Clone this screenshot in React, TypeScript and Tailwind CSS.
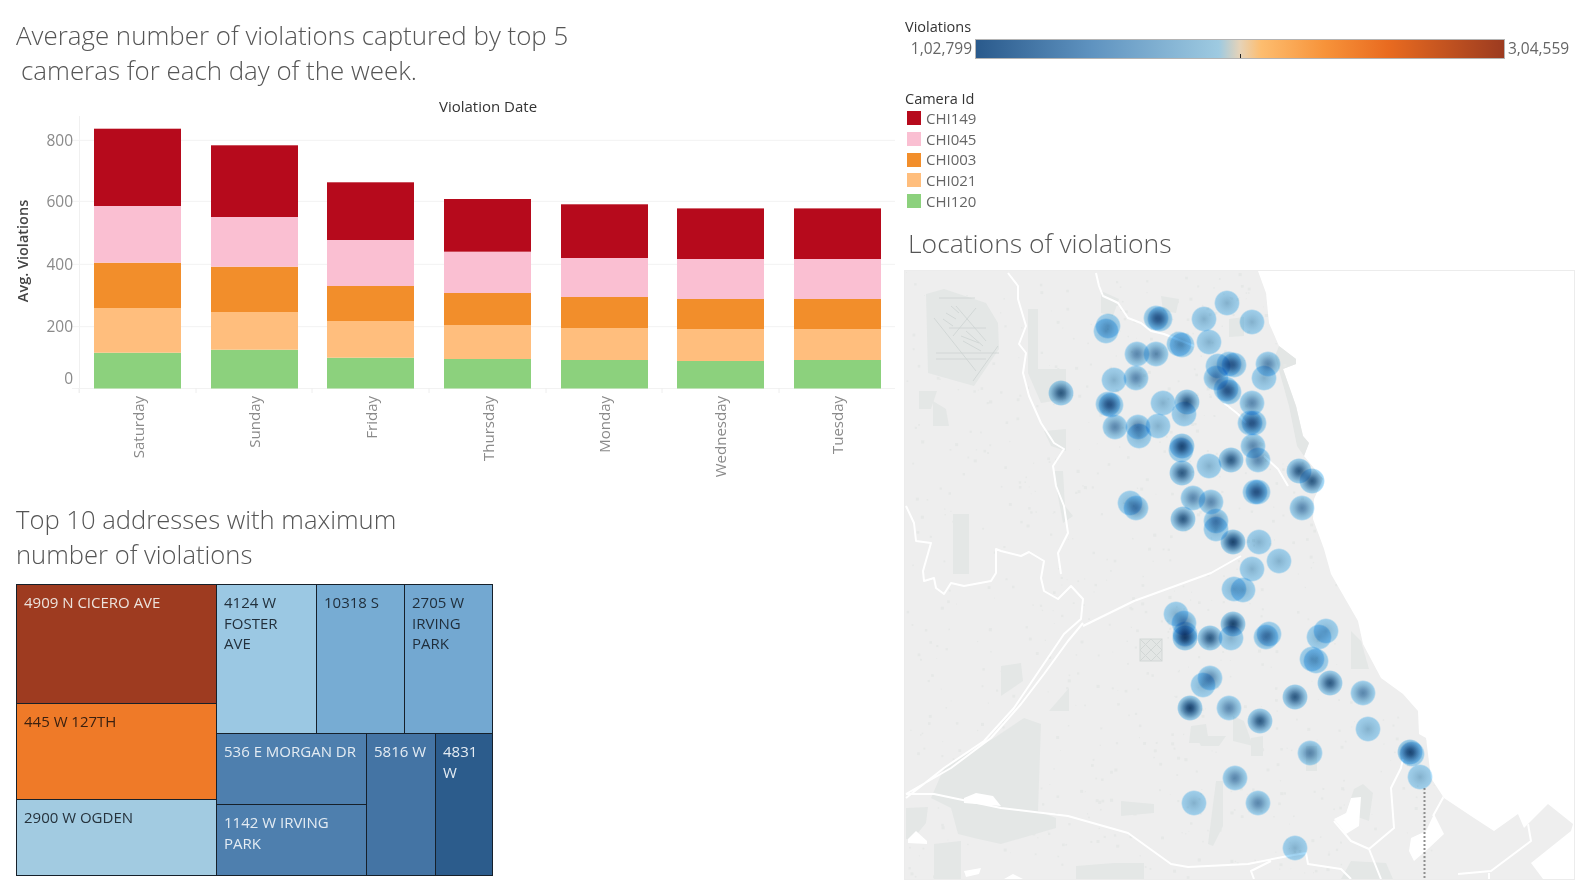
import { FC } from "react";

const BAR_COLORS = ["#8cd17d", "#ffbe7d", "#f28e2b", "#fabfd2", "#b60a1c"];

// y of each segment top, from green up to red, and the base at 388.5
const BARS = [
  { day: "Saturday", x: 94, label: 139, tops: [352.7, 308, 262.7, 206, 128.7] },
  { day: "Sunday", x: 211, label: 255, tops: [349.7, 312, 266.7, 217, 145.3] },
  { day: "Friday", x: 327, label: 372, tops: [357.7, 321, 286, 240, 182.3] },
  { day: "Thursday", x: 444, label: 489, tops: [359, 325, 293, 251.7, 199] },
  { day: "Monday", x: 561, label: 605, tops: [360, 328, 297, 258, 204.3] },
  { day: "Wednesday", x: 677, label: 721, tops: [361, 329, 299, 259, 208.4] },
  { day: "Tuesday", x: 794, label: 838, tops: [360, 329, 299, 259, 208.4] },
];

const TICKS = [
  { v: "800", y: 140.3, text: 146 },
  { v: "600", y: 201.3, text: 207 },
  { v: "400", y: 264.3, text: 270 },
  { v: "200", y: 326.7, text: 331.5 },
  { v: "0", y: 388.5, text: 384 },
];

const CAMERAS = [
  { id: "CHI149", color: "bg-[#b60a1c]" },
  { id: "CHI045", color: "bg-[#fabfd2]" },
  { id: "CHI003", color: "bg-[#f28e2b]" },
  { id: "CHI021", color: "bg-[#ffbe7d]" },
  { id: "CHI120", color: "bg-[#8cd17d]" },
];

// x, y, level: l light, m medium, d dark, v very dark
const SPOTS: [number, number, string][] = [
  [1226, 302, "l"], [1203, 318, "l"], [1251, 321, "l"], [1155, 317, "m"], [1159, 318, "m"],
  [1107, 325, "l"], [1105, 330, "l"], [1208, 341, "l"], [1178, 343, "l"], [1181, 344, "l"],
  [1136, 353, "m"], [1155, 353, "m"], [1217, 365, "l"], [1228, 363, "m"], [1233, 364, "m"],
  [1267, 363, "m"], [1263, 377, "l"], [1215, 377, "m"], [1225, 388, "m"], [1228, 391, "m"],
  [1135, 377, "m"], [1113, 379, "l"], [1060, 392, "d"], [1107, 403, "m"], [1110, 404, "m"],
  [1162, 402, "l"], [1186, 401, "d"], [1183, 413, "l"], [1251, 402, "m"], [1249, 422, "m"],
  [1253, 422, "m"], [1114, 426, "m"], [1137, 426, "m"], [1138, 435, "l"], [1157, 425, "l"],
  [1181, 445, "d"], [1180, 449, "l"], [1252, 445, "m"], [1257, 459, "m"], [1230, 459, "d"],
  [1208, 465, "l"], [1181, 472, "d"], [1298, 470, "d"], [1311, 480, "d"], [1301, 507, "m"],
  [1254, 491, "m"], [1257, 491, "m"], [1129, 502, "l"], [1135, 507, "m"], [1192, 497, "m"],
  [1210, 501, "m"], [1182, 518, "d"], [1215, 520, "m"], [1215, 528, "l"], [1232, 541, "v"],
  [1258, 541, "l"], [1278, 560, "l"], [1251, 568, "l"], [1233, 588, "l"], [1242, 589, "l"],
  [1175, 613, "l"], [1183, 622, "m"], [1184, 637, "d"], [1184, 633, "m"], [1209, 637, "d"],
  [1232, 623, "v"], [1230, 637, "l"], [1265, 636, "m"], [1268, 633, "l"], [1209, 677, "m"],
  [1202, 684, "l"], [1189, 707, "v"], [1228, 707, "m"], [1259, 720, "d"], [1294, 696, "d"],
  [1325, 630, "l"], [1318, 636, "l"], [1311, 658, "l"], [1315, 660, "l"], [1329, 682, "d"],
  [1362, 692, "m"], [1367, 728, "l"], [1409, 751, "d"], [1411, 753, "l"], [1419, 776, "l"],
  [1309, 752, "m"], [1234, 777, "m"], [1193, 802, "l"], [1257, 802, "m"], [1294, 847, "l"],
];

const SPOT_FILL: Record<string, string> = {
  l: "url(#spotL)",
  m: "url(#spotM)",
  d: "url(#spotD)",
  v: "url(#spotV)",
};

const LAND =
  "M904 270 L1257 270 L1265 292 L1268 322 L1278 345 L1295 358 L1295 363 L1282 368 L1295 405 L1302 435 L1308 442 L1303 455 L1322 478 L1313 498 L1312 518 L1323 548 L1330 573 L1357 620 L1362 643 L1380 677 L1402 693 L1417 710 L1418 733 L1425 737 L1430 777 L1443 797 L1473 817 L1493 830 L1517 813 L1523 827 L1547 803 L1572 823 L1570 830 L1530 862 L1542 878 L904 878 Z";

const PARKS = [
  "M925 293 L943 288 L985 302 L997 322 L998 348 L973 385 L927 372 Z",
  "M943 767 L993 737 L1023 717 L1040 723 L1037 810 L1055 817 L1055 827 L1000 843 L973 837 L957 833 L950 807 L930 797 Z",
  "M933 843 L960 840 L960 878 L933 878 Z",
  "M905 807 L927 806 L925 822 L912 838 L905 838 Z",
  "M1027 308 L1037 308 L1037 368 L1065 368 L1065 398 L1040 402 L1027 372 Z",
  "M952 513 L968 513 L968 573 L952 573 Z",
  "M1043 430 L1065 428 L1065 450 L1050 445 Z",
  "M1053 470 L1062 470 L1064 505 L1072 515 L1062 522 L1056 490 Z",
  "M1000 665 L1020 662 L1022 680 L1000 695 Z",
  "M1048 710 L1068 687 L1068 710 Z",
  "M1120 800 L1153 803 L1153 812 L1120 815 Z",
  "M1215 780 L1222 780 L1222 825 L1212 845 L1207 843 Z",
  "M1232 715 L1243 720 L1252 745 L1232 740 Z",
  "M1190 725 L1205 723 L1208 742 L1188 742 Z",
  "M1353 788 L1362 783 L1372 792 L1368 820 L1345 812 Z",
  "M1350 860 L1385 862 L1392 878 L1340 878 Z",
  "M1075 865 L1113 862 L1143 862 L1143 878 L1075 878 Z",
  "M1350 630 L1360 640 L1368 668 L1350 668 Z",
  "M1228 318 L1243 316 L1243 335 L1228 336 Z",
  "M918 390 L936 390 L930 408 L918 408 Z",
  "M932 400 L945 408 L948 425 L932 425 Z",
  "M1100 290 L1118 298 L1112 315 L1100 312 Z",
  "M1160 295 L1178 298 L1175 312 L1162 310 Z",
  "M1305 745 L1316 745 L1316 770 L1305 770 Z",
  "M1250 737 L1262 735 L1262 755 L1250 755 Z",
  "M1195 735 L1225 735 L1218 745 L1200 745 Z",
];

const ROADS = [
  "M1007 272 L1017 285 L1017 298 L1025 325 L1018 343 L1025 352 L1022 372 L1028 395 L1040 422 L1053 442 L1063 448 L1052 465 L1055 485 L1063 505 L1067 532 L1057 552 L1060 573",
  "M1095 272 L1098 285 L1102 295 L1113 300 L1117 302 L1127 317 L1140 322 L1150 330 L1163 333 L1193 345",
  "M1223 402 L1237 413 L1245 422",
  "M1263 455 L1277 468 L1287 485",
  "M905 505 L913 522 L915 540 L930 542 L922 570 L923 580 L933 577 L935 587 L943 593 L950 582 L963 585 L990 580 L995 572 L995 548 L1000 550 L1020 555 L1028 551 L1043 560 L1040 577 L1043 590 L1057 598 L1070 585 L1082 598 L1080 618 L1063 633 L1040 667 L1013 707 L983 740 L943 767 L905 797",
  "M1082 622 L1067 640 L1043 673 L1020 703 L990 737 L950 767 L905 793",
  "M1082 625 L1133 600 L1210 572 L1240 555",
  "M905 793 L933 793 L1000 807 L1067 815 L1127 832 L1170 863 L1187 866 L1247 863 L1287 855 L1305 852 L1307 863 L1340 868 L1350 878",
  "M1270 860 L1250 870 L1253 878",
  "M1402 758 L1400 767 L1390 787 L1393 827 L1368 848 L1350 840 L1333 820",
  "M1368 848 L1380 878",
  "M1527 823 L1530 840 L1490 870 L1457 873",
  "M1488 872 L1488 878",
  "M1443 795 L1432 815",
];

const LAKES = [
  "M1410 837 L1408 850 L1413 860 L1428 847 L1443 833 L1433 813 L1425 830 Z",
  "M1350 797 L1360 796 L1358 825 L1345 833 L1333 818 L1345 812 Z",
  "M963 797 L975 792 L992 795 L1000 805 L963 802 Z",
  "M907 838 L915 830 L926 840 L926 843 L907 842 Z",
  "M963 870 L980 867 L978 873 L965 876 Z",
  "M1003 878 L1012 873 L1022 878 Z",
];

// scatter of small building blocks that gives the land its grain
const SPECKS = Array.from({ length: 900 }, (_, i) => {
  const a = Math.abs(Math.sin(i * 12.9898) * 43758.5453) % 1;
  const b = Math.abs(Math.sin(i * 78.233) * 24634.6345) % 1;
  const c = Math.abs(Math.sin(i * 37.719) * 9631.771) % 1;
  return { x: 905 + a * 530, y: 271 + b * 606, s: 0.8 + c * 2.4 };
});

const BarChart: FC = () => (
  <svg viewBox="0 96 895 394" className="block w-[895px] h-[394px]">
    <text x="488" y="112" textAnchor="middle" fontSize="15" fill="#333">
      Violation Date
    </text>
    <line x1="79.5" x2="79.5" y1="116" y2="393" stroke="#f0f0f0" />
    {TICKS.map((t) => (
      <g key={t.v}>
        <line x1="72" x2="895" y1={t.y} y2={t.y} stroke="#f2f2f2" />
        <text x="73" y={t.text} textAnchor="end" fontSize="15.5" fill="#8a8a8a">
          {t.v}
        </text>
      </g>
    ))}
    <text
      transform="translate(27.5 251) rotate(-90)"
      textAnchor="middle"
      fontSize="14.5"
      fontWeight="600"
      fill="#444"
    >
      Avg. Violations
    </text>
    {BARS.map((bar) => (
      <g key={bar.day}>
        {bar.tops.map((top, i) => {
          const bottom = i === 0 ? 388.5 : bar.tops[i - 1];
          return (
            <rect
              key={i}
              x={bar.x}
              y={top}
              width="87"
              height={bottom - top}
              fill={BAR_COLORS[i]}
            />
          );
        })}
        <line x1={bar.x - 15} x2={bar.x - 15} y1="388" y2="393" stroke="#eeeeee" />
        <text
          transform={`translate(${bar.label + 5} 396) rotate(-90)`}
          textAnchor="end"
          fontSize="15"
          fill="#8a8a8a"
        >
          {bar.day}
        </text>
      </g>
    ))}
  </svg>
);

interface ICellProps {
  label: string;
  className: string;
}

const Cell: FC<ICellProps> = ({ label, className }) => (
  <div className={`whitespace-pre-line pl-[7px] pt-[7px] text-[15px] leading-[20.5px] ${className}`}>
    {label}
  </div>
);

const TreeMap: FC = () => (
  <div className="ml-4 mt-3 flex h-[292px] w-[477px] gap-px bg-[#16202a] p-px">
    <div className="flex w-[199px] flex-col gap-px">
      <Cell label="4909 N CICERO AVE" className="h-[118px] bg-[#9e3b20] text-[#ece2dc]" />
      <Cell label="445 W 127TH" className="h-[95px] bg-[#ef7a28] text-[#3a2010]" />
      <Cell label="2900 W OGDEN" className="flex-1 bg-[#a2cbe1] text-[#25323c]" />
    </div>
    <div className="flex flex-1 flex-col gap-px">
      <div className="flex h-[148px] gap-px">
        <Cell label={"4124 W\nFOSTER\nAVE"} className="w-[99px] bg-[#9bc8e3] text-[#22303c]" />
        <Cell label="10318 S" className="w-[87px] bg-[#77acd3] text-[#1f2d3a]" />
        <Cell label={"2705 W\nIRVING\nPARK"} className="flex-1 bg-[#73a8d1] text-[#1f2d3a]" />
      </div>
      <div className="flex flex-1 gap-px">
        <div className="flex w-[149px] flex-col gap-px">
          <Cell label="536 E MORGAN DR" className="h-[70px] bg-[#4e7fae] text-[#e4ecf3]" />
          <Cell label={"1142 W IRVING\nPARK"} className="flex-1 bg-[#4e7fae] text-[#e4ecf3]" />
        </div>
        <Cell label="5816 W" className="w-[68px] bg-[#4474a4] text-[#e4ecf3]" />
        <Cell label={"4831\nW"} className="flex-1 bg-[#2c5c8c] text-[#e4ecf3]" />
      </div>
    </div>
  </div>
);

const ColorLegend: FC = () => (
  <div className="mt-[3px] flex h-5 items-center text-[15.5px] text-[#666]">
    <span className="w-[68px] text-right">1,02,799</span>
    <div className="relative ml-[3px] h-5 w-[530px] border border-[#b4b4b4] bg-[linear-gradient(90deg,#2a5a8c_0%,#5f93c0_22%,#9ecae1_46%,#e6d3b8_50%,#fdbd6f_54%,#f7933a_66%,#e96b20_78%,#9c3b20_100%)]">
      <div className="absolute bottom-0 left-[264px] h-1 w-px bg-[#222]" />
    </div>
    <span className="ml-[3px]">3,04,559</span>
  </div>
);

const ViolationMap: FC = () => (
  <svg
    viewBox="904 270 669 608"
    className="mt-[9px] block h-[610px] w-[671px] border border-[#ececec] bg-white"
  >
    <defs>
      <radialGradient id="spotL">
        <stop offset="0%" stopColor="#8cbcda" />
        <stop offset="30%" stopColor="#98cae8" />
        <stop offset="65%" stopColor="#a4d6f4" />
        <stop offset="88%" stopColor="#a8dcfa" />
        <stop offset="100%" stopColor="#a8dcfa" stopOpacity="0" />
      </radialGradient>
      <radialGradient id="spotM">
        <stop offset="0%" stopColor="#5f90b8" />
        <stop offset="25%" stopColor="#6f9fc6" />
        <stop offset="60%" stopColor="#92c5e4" />
        <stop offset="88%" stopColor="#a8dcfa" />
        <stop offset="100%" stopColor="#a8dcfa" stopOpacity="0" />
      </radialGradient>
      <radialGradient id="spotD">
        <stop offset="0%" stopColor="#2f5f8a" />
        <stop offset="25%" stopColor="#4576a0" />
        <stop offset="55%" stopColor="#74a8ce" />
        <stop offset="80%" stopColor="#9bcfee" />
        <stop offset="90%" stopColor="#a6daf8" />
        <stop offset="100%" stopColor="#a6daf8" stopOpacity="0" />
      </radialGradient>
      <radialGradient id="spotV">
        <stop offset="0%" stopColor="#1c4873" />
        <stop offset="25%" stopColor="#2f5f8e" />
        <stop offset="55%" stopColor="#5f96bf" />
        <stop offset="80%" stopColor="#94c8e8" />
        <stop offset="90%" stopColor="#a4d8f6" />
        <stop offset="100%" stopColor="#a4d8f6" stopOpacity="0" />
      </radialGradient>
      <clipPath id="landClip">
        <path d={LAND} />
      </clipPath>
    </defs>
    <path d={LAND} fill="#eeeeee" />
    <path
      d="M1278 345 L1295 358 L1295 363 L1282 368 L1295 405 L1302 435 L1308 442 L1303 455 L1296 445 L1288 405 L1274 355 Z"
      fill="#e3e6e5"
    />
    <g clipPath="url(#landClip)">
      {SPECKS.map((s, i) => (
        <rect key={i} x={s.x} y={s.y} width={s.s} height={s.s} fill="#e6e8e7" />
      ))}
      {PARKS.map((d) => (
        <path key={d} d={d} fill="#e4e7e6" />
      ))}
      {/* O'Hare runways */}
      <g stroke="#cdd3d2" strokeWidth="0.8" fill="none">
        <path d="M938 297 L974 297 M955 305 L985 340 M975 307 L952 335 M933 317 L975 370 M948 327 L985 327 M935 352 L998 352 M935 358 L985 358 M997 345 L972 380" />
        <path d="M950 305 L958 312 M945 312 L955 318 M942 318 L952 325 M960 335 L978 342 M965 330 L982 345 M962 340 L980 350" />
      </g>
      {/* Midway */}
      <g stroke="#d2d7d6" fill="#e3e6e5">
        <rect x="1139" y="638" width="22" height="22" />
        <path d="M1139 638 L1161 660 M1161 638 L1139 660 M1150 638 L1161 649 M1139 649 L1150 660 M1150 638 L1139 649 M1161 649 L1150 660" fill="none" />
      </g>
      {LAKES.map((d) => (
        <path key={d} d={d} fill="#ffffff" />
      ))}
      <path
        d={ROADS.join(" ")}
        fill="none"
        stroke="#ffffff"
        strokeWidth="2"
        strokeLinejoin="round"
      />
      <line x1="1423.5" x2="1423.5" y1="787" y2="878" stroke="#8f8f8f" strokeWidth="2" strokeDasharray="2 2" />
    </g>
    {SPOTS.map(([x, y, level], i) => (
      <circle
        key={i}
        cx={x}
        cy={y}
        r="13"
        fill={SPOT_FILL[level]}
        className="mix-blend-multiply"
      />
    ))}
  </svg>
);

export default function App() {
  return (
    <div className="flex h-[892px] w-[1586px] overflow-hidden bg-white font-['Open_Sans',sans-serif]">
      <div className="flex w-[895px] flex-col">
        <h1 className="ml-4 mt-[18px] text-[25.9px] font-light leading-[35px] text-[#555]">
          Average number of violations captured by top 5
          <span className="block pl-[5px]">cameras for each day of the week.</span>
        </h1>
        <div className="mt-[8px]">
          <BarChart />
        </div>
        <h2 className="ml-4 mt-3 text-[25.6px] font-light leading-[35px] text-[#555]">
          Top 10 addresses with maximum
          <span className="block">number of violations</span>
        </h2>
        <TreeMap />
      </div>
      <div className="flex flex-1 flex-col pl-[9px]">
        <div className="mt-[18px] h-[18px] pl-[1px] text-[14.5px] leading-[18px] text-[#333]">Violations</div>
        <ColorLegend />
        <div className="mt-[31px] h-[18px] pl-[1px] text-[14.5px] leading-[18px] text-[#333]">Camera Id</div>
        {CAMERAS.map((c) => (
          <div key={c.id} className="flex h-[20.7px] items-center gap-[5px] pl-[3px] text-[15px] text-[#666]">
            <span className={`h-[14px] w-[14px] ${c.color}`} />
            {c.id}
          </div>
        ))}
        <h2 className="ml-[4px] mt-[14.5px] text-[26.5px] font-light leading-[35px] text-[#555]">
          Locations of violations
        </h2>
        <ViolationMap />
      </div>
    </div>
  );
}
